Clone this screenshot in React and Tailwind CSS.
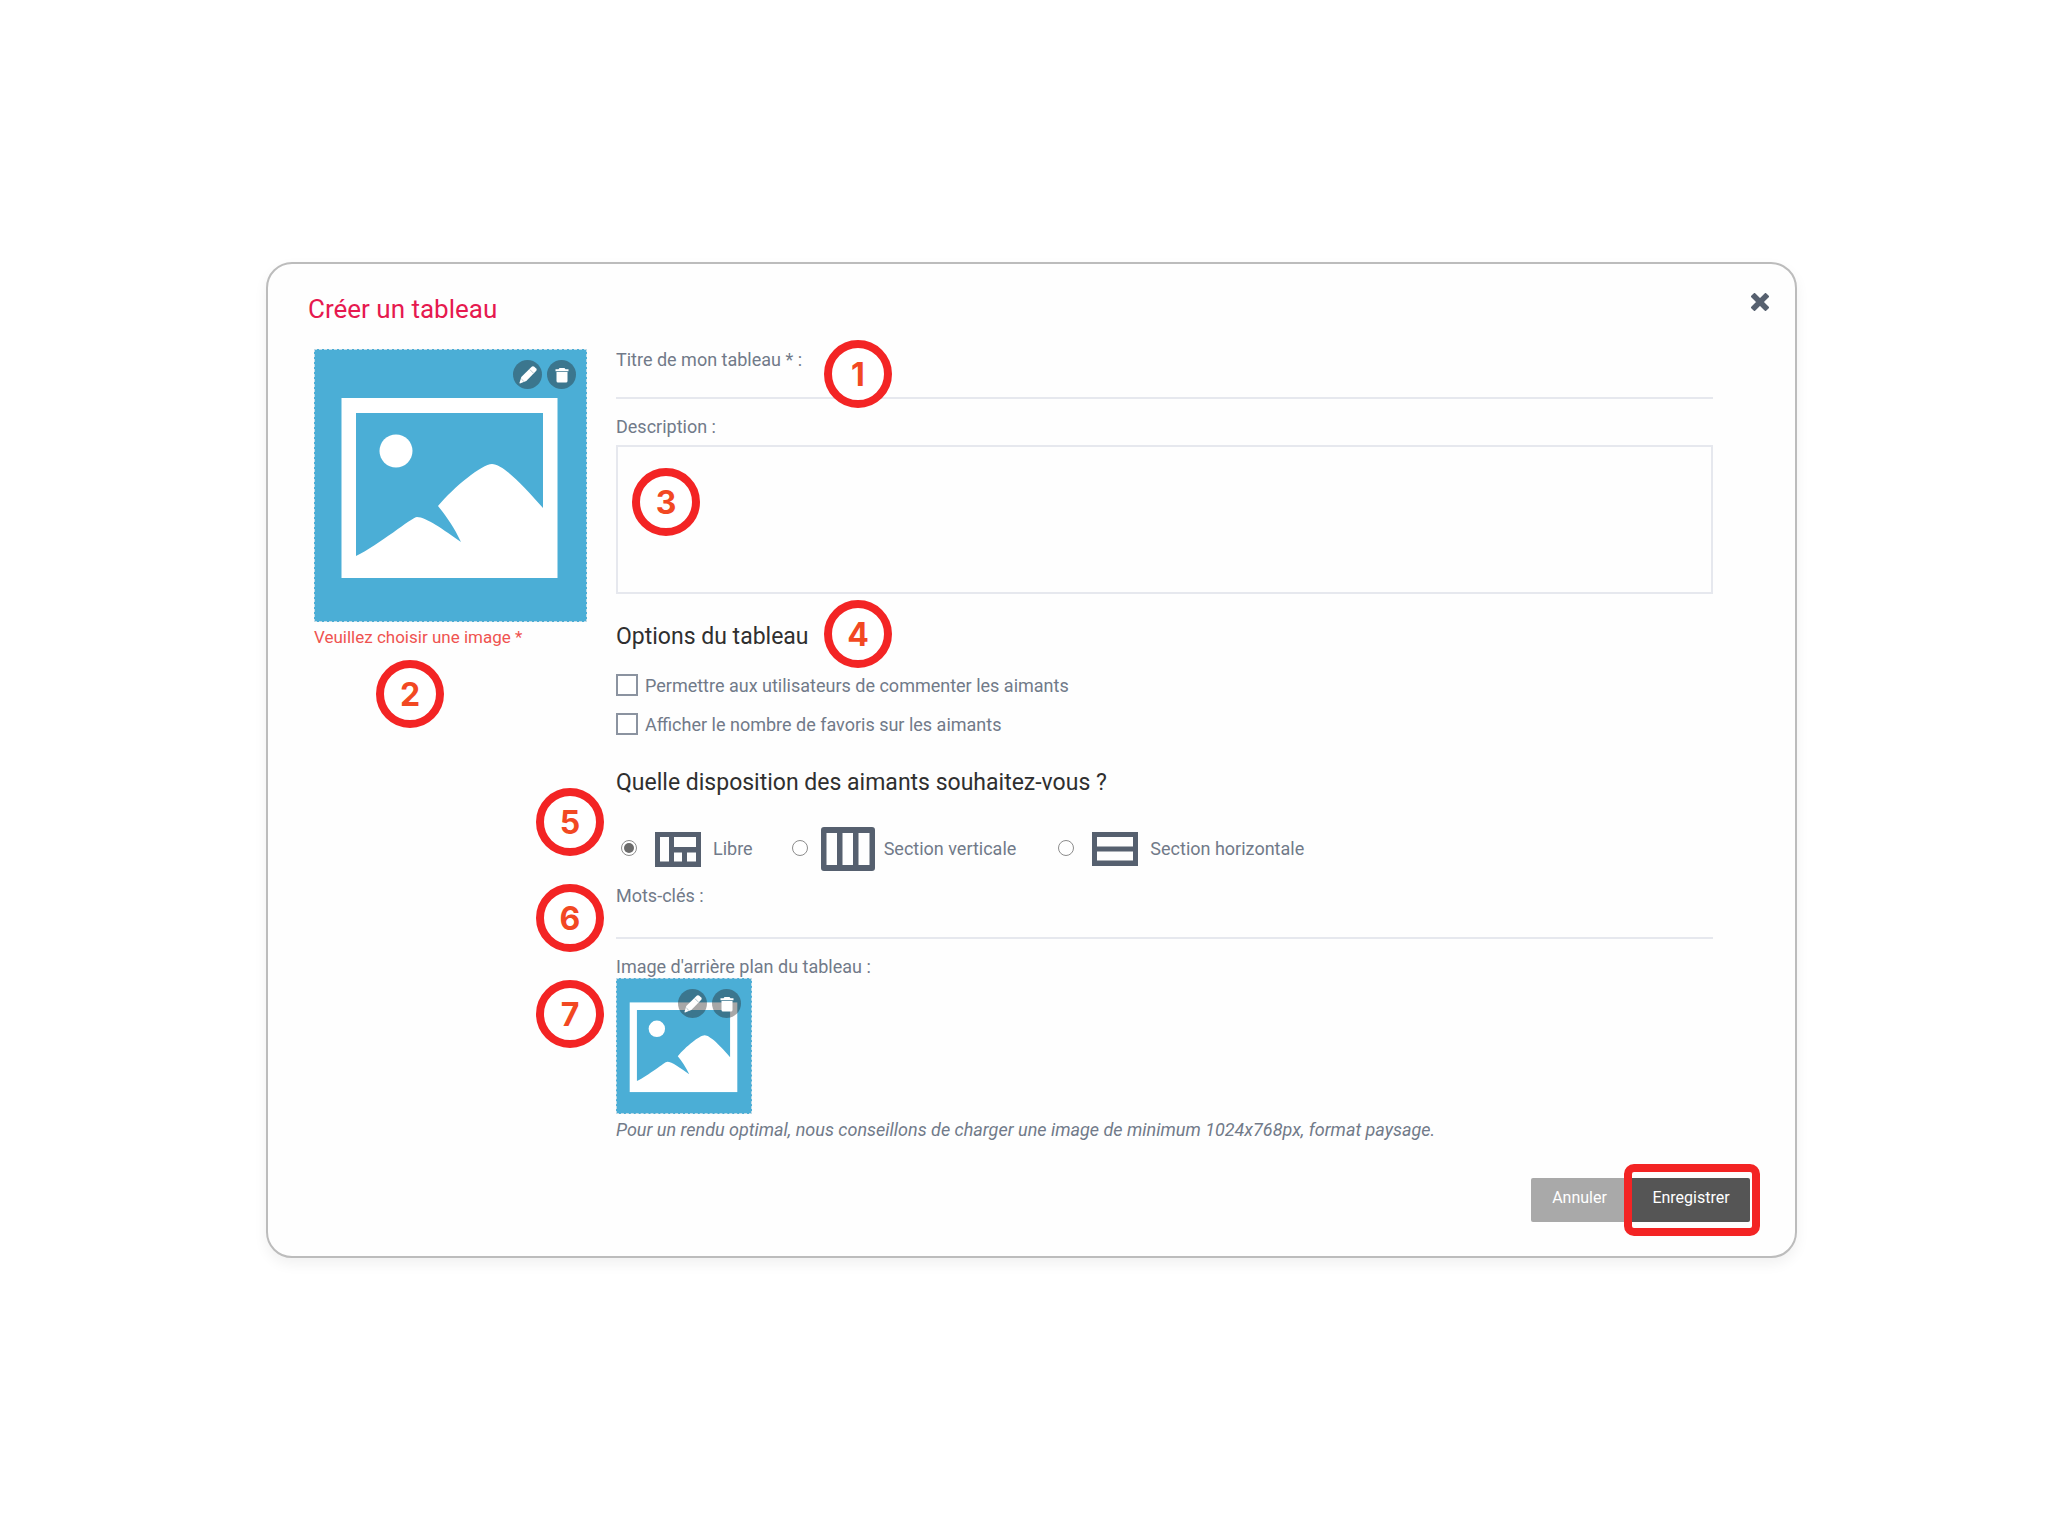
import React from "react";

function Badge({ n, className }) {
  return (
    <span
      className={`absolute z-10 flex size-17 items-center justify-center rounded-full border-8 border-[#f32424] bg-white pt-0.5 font-[Inter,sans-serif] text-[32px] leading-none font-bold text-[#f24822] ${className}`}
    >
      {n}
    </span>
  );
}

function PencilIcon() {
  return (
    <svg viewBox="0 0 20 20" className="size-5" fill="#fff" aria-hidden="true">
      <path d="M12.4 2.9 14 1.500q1.200-.8 2.300.2l1.900 1.900q1 1.100.1 2.200L8.300 16.100 2 18.500q-.7 0-.5-.8L3.300 12z" />
      <path d="m3.400 14 2.400 2.400M11.800 4.500l3.600 3.600" stroke="#9fb6bf" strokeWidth="0.8" fill="none" />
    </svg>
  );
}

function TrashIcon() {
  return (
    <svg viewBox="0 0 20 20" className="size-5" fill="#fff" aria-hidden="true">
      <path d="M7.500 3h5l1 1.200H16.500v2H3.500v-2H6.500zM4.500 7h11v9q0 1.500-1.500 1.500H6Q4.500 17.500 4.500 16z" />
    </svg>
  );
}

function PicturePicker({ className, label }) {
  return (
    <div className={`relative ${className}`}>
      <svg viewBox="0 0 273 273" className="size-full" role="img" aria-label={label}>
        <rect width="273" height="273" fill="#4baed6" />
        <rect x="27.500" y="49" width="216" height="180" fill="#fff" />
        <path
          d="M42 64H229V159C210 137 189 115 178 115C168 115 140 138 124 157C132 167 140 178 147 193C130 181 112 168 103 168C98 168 65 196 42 207Z"
          fill="#4baed6"
        />
        <circle cx="82" cy="102" r="16.5" fill="#fff" />
      </svg>
      <div className="pointer-events-none absolute inset-0 border border-dashed border-[#c3dce8]" />
      <div className="absolute top-[11px] right-[11px] flex gap-[5px]">
        <button
          type="button"
          aria-label="Modifier"
          className="flex size-[29px] items-center justify-center rounded-full bg-[#222]/40"
        >
          <PencilIcon />
        </button>
        <button
          type="button"
          aria-label="Supprimer"
          className="flex size-[29px] items-center justify-center rounded-full bg-[#222]/40"
        >
          <TrashIcon />
        </button>
      </div>
    </div>
  );
}

function CheckOption({ children }) {
  return (
    <label className="flex h-[39px] items-center gap-[7px]">
      <input
        type="checkbox"
        className="mb-0.5 size-[22px] shrink-0 appearance-none border-2 border-[#8b93a0] bg-white checked:bg-[#8b93a0]"
      />
      {children}
    </label>
  );
}

function Radio({ id, defaultChecked }) {
  return (
    <input
      id={id}
      type="radio"
      name="disposition"
      defaultChecked={defaultChecked}
      className="mb-0.5 flex size-4 shrink-0 appearance-none items-center justify-center rounded-full border border-[#8c8c8c] bg-white before:size-2.5 before:rounded-full checked:before:bg-[#6b6b6b]"
    />
  );
}

function FreeIcon() {
  return (
    <svg viewBox="0 0 46 35" className="h-[35px] w-[46px]" aria-hidden="true">
      <path
        fillRule="evenodd"
        fill="#56606f"
        d="M0 0H46V35H0ZM5 5V29.500H14V5ZM19 5V15H41V5ZM19 20.500V29.500H27V20.500ZM32 20.500V29.500H41V20.500Z"
      />
    </svg>
  );
}

function ColumnsIcon() {
  return (
    <svg viewBox="0 0 54 44" className="h-11 w-[54px]" aria-hidden="true">
      <path
        fillRule="evenodd"
        fill="#56606f"
        d="M3 0H51Q54 0 54 3V41Q54 44 51 44H3Q0 44 0 41V3Q0 0 3 0ZM5.500 6V38H16V6ZM21.500 6V38H32V6ZM37.500 6V38H48.500V6Z"
      />
    </svg>
  );
}

function RowsIcon() {
  return (
    <svg viewBox="0 0 46 34" className="h-[34px] w-[46px]" aria-hidden="true">
      <path fillRule="evenodd" fill="#56606f" d="M0 0H46V34H0ZM5 5V14.500H41V5ZM5 19.500V28.500H41V19.500Z" />
    </svg>
  );
}

export default function App() {
  return (
    <main className="min-h-screen bg-white px-[266px] py-[262px] font-[Roboto,sans-serif] text-[18px] leading-[22px] text-[#717a89]">
      <form className="rounded-[26px] border-2 border-[#bcbcbc] bg-[#fefefe] pb-[34px] shadow-[0_6px_14px_rgba(0,0,0,0.06)]">
        <header className="flex items-start justify-between pt-[29px] pr-[26px] pl-10">
          <h1 className="text-[26px] leading-8 text-[#e6194f]">Créer un tableau</h1>
          <button type="button" aria-label="Fermer">
            <svg viewBox="0 0 18 18" className="size-[18px]" aria-hidden="true">
              <path
                d="M3.500 3.500 14.500 14.500M14.500 3.500 3.500 14.500"
                stroke="#56606f"
                strokeWidth="5.500"
                strokeLinecap="square"
                strokeLinejoin="round"
              />
            </svg>
          </button>
        </header>

        <div className="mt-6 flex gap-[29px] pr-[82px] pl-[46px]">
          <div className="relative w-[273px] shrink-0">
            <PicturePicker className="size-[273px]" label="Image du tableau" />
            <p className="mt-1 text-[17px] text-[#ef5350]">Veuillez choisir une image *</p>
            <Badge n={2} className="top-[311px] left-[62px]" />
          </div>

          <div className="min-w-0 flex-1">
            <div className="relative">
              <label htmlFor="titre" className="block">
                Titre de mon tableau * :
              </label>
              <input
                id="titre"
                type="text"
                className="block h-7 w-full border-b-2 border-[#e6e8ee] bg-transparent outline-none"
              />
              <Badge n={1} className="-top-[9px] left-[208px]" />
            </div>

            <div className="relative mt-[17px]">
              <label htmlFor="description" className="block">
                Description :
              </label>
              <textarea
                id="description"
                className="mt-[7px] block h-[149px] w-full resize-none border-2 border-[#e6e8ee] bg-transparent outline-none"
              />
              <Badge n={3} className="top-[52px] left-4" />
            </div>

            <div className="relative mt-[29px]">
              <h2 className="text-[23px] leading-7 text-[#2f2f2f]">Options du tableau</h2>
              <Badge n={4} className="-top-[23px] left-[208px]" />
              <div className="mt-[15px]">
                <CheckOption>Permettre aux utilisateurs de commenter les aimants</CheckOption>
                <CheckOption>Afficher le nombre de favoris sur les aimants</CheckOption>
              </div>
            </div>

            <div className="relative mt-[25px]">
              <h2 className="text-[23px] leading-7 text-[#2f2f2f]">
                Quelle disposition des aimants souhaitez-vous ?
              </h2>
              <Badge n={5} className="top-[19px] -left-20" />
              <div className="mt-7 flex h-12 items-center pl-[5px]">
                <Radio id="libre" defaultChecked />
                <label htmlFor="libre" className="ml-[18px] flex items-center gap-3">
                  <FreeIcon />
                  Libre
                </label>
                <span className="w-[39px]" />
                <Radio id="verticale" />
                <label htmlFor="verticale" className="ml-[13px] flex items-center gap-[9px]">
                  <ColumnsIcon />
                  Section verticale
                </label>
                <span className="w-[42px]" />
                <Radio id="horizontale" />
                <label htmlFor="horizontale" className="ml-[18px] flex items-center gap-3">
                  <RowsIcon />
                  Section horizontale
                </label>
              </div>
            </div>

            <div className="relative mt-3">
              <label htmlFor="mots" className="block">
                Mots-clés :
              </label>
              <input
                id="mots"
                type="text"
                className="block h-8 w-full border-b-2 border-[#e6e8ee] bg-transparent outline-none"
              />
              <Badge n={6} className="-top-px -left-20" />
            </div>

            <div className="relative mt-[17px]">
              <p>Image d'arrière plan du tableau :</p>
              <PicturePicker className="size-[136px]" label="Image d'arrière plan" />
              <p className="mt-[5px] italic">
                Pour un rendu optimal, nous conseillons de charger une image de minimum 1024x768px, format paysage.
              </p>
              <Badge n={7} className="top-6 -left-20" />
            </div>
          </div>
        </div>

        <div className="mt-[37px] flex justify-end pr-[45px] text-base text-white">
          <button type="button" className="h-11 w-[101px] rounded-l-xs bg-[#a9a9a9] pr-1 pb-1">
            Annuler
          </button>
          <div className="relative">
            <button type="submit" className="h-11 w-[118px] rounded-r-xs bg-[#555] pb-1">
              Enregistrer
            </button>
            <span className="pointer-events-none absolute -inset-x-2 -inset-y-3.5 -mr-0.5 rounded-[10px] border-8 border-[#f32424]" />
          </div>
        </div>
      </form>
    </main>
  );
}
